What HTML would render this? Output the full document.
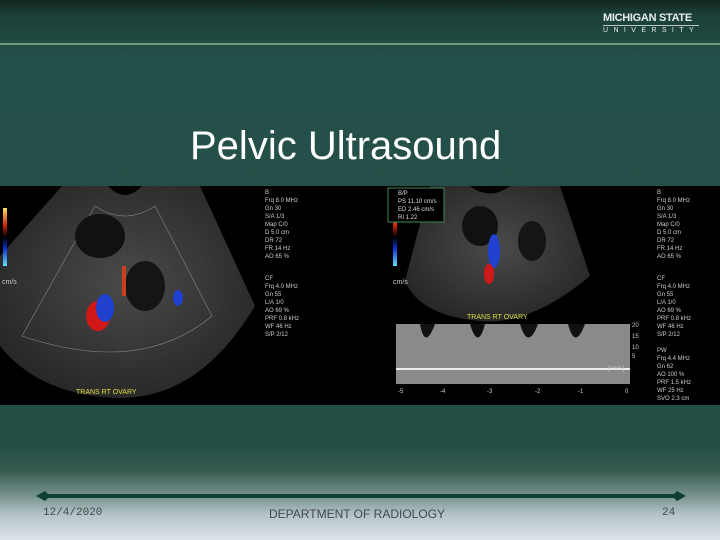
<!DOCTYPE html>
<html><head><meta charset="utf-8"><style>
html,body{margin:0;padding:0}
body{width:720px;height:540px;position:relative;overflow:hidden;font-family:"Liberation Sans",sans-serif;
background:linear-gradient(to bottom,#112620 0px,#1b3f37 14px,#1f4a41 40px,#24504a 60px,#234e45 445px,#36594f 470px,#74918b 495px,#b5c4c8 515px,#dde4ea 540px);}
.hl{position:absolute;left:0;top:43px;width:720px;height:2px;background:#6f9a78}
.msu{position:absolute;left:603px;top:12px;color:#e8ece9;font-family:"Liberation Sans Narrow","Liberation Sans",sans-serif;font-size:11px;font-weight:bold;letter-spacing:-0.3px;line-height:12px}
.msu .u{border-top:1.5px solid #bcc8c2;font-size:7px;letter-spacing:5.4px;font-weight:normal;line-height:9px;margin-top:1px}
.title{position:absolute;left:190px;top:124px;font-size:40px;color:#fff}
.img{position:absolute;left:0;top:186px;width:720px;height:219px;background:#000}
.line{position:absolute;left:44px;top:494px;width:634px;height:4px;background:#0f3f33}
.f{position:absolute;top:507px;font-size:12px;color:#3e4b4c}
</style></head><body>
<div class="hl"></div>
<div class="msu">MICHIGAN STATE<div class="u">UNIVERSITY</div></div>
<div class="title">Pelvic Ultrasound</div>
<div class="img">
<svg width="720" height="219" viewBox="0 0 720 219">
<defs><radialGradient id="g1" cx="0.5" cy="0.45" r="0.6"><stop offset="0" stop-color="#4a4a4a"/><stop offset="1" stop-color="#262626"/></radialGradient>
<linearGradient id="cb" x1="0" y1="0" x2="0" y2="1"><stop offset="0" stop-color="#ffe060"/><stop offset=".3" stop-color="#d02010"/><stop offset=".5" stop-color="#000"/><stop offset=".7" stop-color="#1030d0"/><stop offset="1" stop-color="#60e0ff"/></linearGradient></defs>
<path d="M62 0 L108 0 Q125 18 142 0 L200 0 L255 120 Q200 212 120 212 Q40 210 0 160 L0 70 Z" fill="url(#g1)"/>
<path d="M22 150 L95 20 Q125 40 155 20 L212 130 Q140 190 22 150Z" fill="none" stroke="#887" stroke-width=".6"/>
<ellipse cx="100" cy="50" rx="25" ry="22" fill="#111"/><ellipse cx="145" cy="100" rx="20" ry="25" fill="#151515"/>
<ellipse cx="98" cy="130" rx="12" ry="15" fill="#d01818"/><ellipse cx="105" cy="122" rx="9" ry="14" fill="#2040d0"/>
<ellipse cx="178" cy="112" rx="5" ry="8" fill="#2040d0"/><rect x="122" y="80" width="4" height="30" fill="#c84020"/>
<rect x="3" y="22" width="4" height="58" fill="url(#cb)"/>
<text x="2" y="98" fill="#ccc" font-size="7">cm/s</text>
<text x="76" y="208" fill="#dd4" font-size="7">TRANS RT OVARY</text>
<g fill="#ccc" font-size="6"><text x="265" y="8">B</text><text x="265" y="16">Frq  8.0 MHz</text><text x="265" y="24">Gn   30</text><text x="265" y="32">S/A  1/3</text><text x="265" y="40">Map  C/0</text><text x="265" y="48">D    5.0 cm</text><text x="265" y="56">DR   72</text><text x="265" y="64">FR   14 Hz</text><text x="265" y="72">AO   65 %</text>
<text x="265" y="94">CF</text><text x="265" y="102">Frq  4.0 MHz</text><text x="265" y="110">Gn   55</text><text x="265" y="118">L/A  1/0</text><text x="265" y="126">AO   69 %</text><text x="265" y="134">PRF  0.8 kHz</text><text x="265" y="142">WF   46 Hz</text><text x="265" y="150">S/P  2/12</text></g>
<path d="M430 0 L470 0 Q490 15 510 0 L560 0 L590 90 Q530 140 480 135 Q420 130 405 95 Z" fill="url(#g1)"/>
<ellipse cx="480" cy="40" rx="18" ry="20" fill="#111"/><ellipse cx="532" cy="55" rx="14" ry="20" fill="#151515"/>
<ellipse cx="494" cy="65" rx="6" ry="17" fill="#2040d0"/><ellipse cx="489" cy="88" rx="5" ry="10" fill="#d01818"/>
<rect x="393" y="22" width="4" height="58" fill="url(#cb)"/><text x="393" y="98" fill="#ccc" font-size="7">cm/s</text>
<rect x="388" y="2" width="56" height="34" fill="#000" stroke="#3a8a55"/>
<g fill="#ddd" font-size="6"><text x="398" y="9">B/P</text><text x="398" y="17">PS  11.10 cm/s</text><text x="398" y="25">ED   2.46 cm/s</text><text x="398" y="33">RI        1.22</text></g>
<text x="467" y="133" fill="#dd4" font-size="7">TRANS RT OVARY</text>
<rect x="396" y="138" width="234" height="60" fill="#8a8a8a"/>
<path d="M396 138 L420 138 Q425 165 435 138 L470 138 Q478 165 485 138 L520 138 Q528 165 538 138 L568 138 Q575 165 585 138 L630 138 L630 138Z" fill="#111"/>
<rect x="396" y="182" width="234" height="2" fill="#eee"/>
<g fill="#ccc" font-size="6"><text x="632" y="141">20</text><text x="632" y="152">15</text><text x="632" y="163">10</text><text x="632" y="172">5</text><text x="608" y="184">[cm/s]</text>
<text x="398" y="207">-5</text><text x="440" y="207">-4</text><text x="487" y="207">-3</text><text x="535" y="207">-2</text><text x="578" y="207">-1</text><text x="625" y="207">0</text>
<text x="657" y="8">B</text><text x="657" y="16">Frq  8.0 MHz</text><text x="657" y="24">Gn   30</text><text x="657" y="32">S/A  1/3</text><text x="657" y="40">Map  C/0</text><text x="657" y="48">D    5.0 cm</text><text x="657" y="56">DR   72</text><text x="657" y="64">FR   14 Hz</text><text x="657" y="72">AO   65 %</text>
<text x="657" y="94">CF</text><text x="657" y="102">Frq  4.0 MHz</text><text x="657" y="110">Gn   55</text><text x="657" y="118">L/A  1/0</text><text x="657" y="126">AO   69 %</text><text x="657" y="134">PRF  0.8 kHz</text><text x="657" y="142">WF   46 Hz</text><text x="657" y="150">S/P  2/12</text>
<text x="657" y="166">PW</text><text x="657" y="174">Frq  4.4 MHz</text><text x="657" y="182">Gn   62</text><text x="657" y="190">AO   100 %</text><text x="657" y="198">PRF  1.5 kHz</text><text x="657" y="206">WF   25 Hz</text><text x="657" y="214">SVO  2.3 cm</text></g>
</svg></div>
<div class="line"></div>
<svg style="position:absolute;left:36px;top:490px" width="650" height="12"><path d="M0 6 L9 1 L12 4 L18 4 L18 8 L12 8 L9 11Z" fill="#0f3f33"/><path d="M650 6 L641 1 L638 4 L632 4 L632 8 L638 8 L641 11Z" fill="#0f3f33"/></svg>
<div class="f" style="left:43px;font-family:'Liberation Mono',monospace;font-size:11px">12/4/2020</div>
<div class="f" style="left:269px">DEPARTMENT OF RADIOLOGY</div>
<div class="f" style="left:662px;font-family:'Liberation Mono',monospace;font-size:11px">24</div>
</body></html>
